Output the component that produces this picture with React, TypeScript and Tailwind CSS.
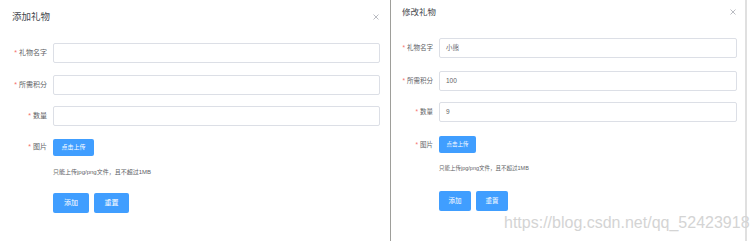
const font = { fontFamily: '"Liberation Sans", "Noto Sans CJK SC", sans-serif' };

function CloseIcon() {
  return (
    <svg width="6" height="6" viewBox="0 0 6 6" className="shrink-0">
      <path d="M0.5 0.5 L5.5 5.5 M5.5 0.5 L0.5 5.5" stroke="#a8abb2" strokeWidth="0.8" />
    </svg>
  );
}

type Row = { label: string; value: string };

function Field({ label, value, labelW, mr, mt, size }: Row & { labelW: string; mr: string; mt: string; size: string }) {
  return (
    <div className={`flex items-center h-[20px] ${mt}`}>
      <div className={`${labelW} shrink-0 pr-[6px] text-right text-[#606266] whitespace-nowrap ${size}`}>
        <span className="text-[#f56c6c] mr-[2px]">*</span>
        {label}
      </div>
      <div
        className={`flex-1 h-[20px] ${mr} border border-[#dcdfe6] rounded-[2px] flex items-center pl-[6px] text-[#606266] ${size}`}
      >
        {value}
      </div>
    </div>
  );
}

export default function App() {
  return (
    <div className="relative w-[756px] h-[241px] bg-white flex overflow-hidden" style={font}>
      {/* 添加 */}
      <div className="w-[390px] shrink-0 flex flex-col">
        <div className="flex items-center justify-between h-[34px] pl-[12px] pr-[11px]">
          <span className="text-[9.5px] text-[#44474d]">添加礼物</span>
          <CloseIcon />
        </div>
        <div className="mt-[9px]">
          <Field label="礼物名字" value="" labelW="w-[53px]" mr="mr-[10px]" mt="" size="text-[7px]" />
          <Field label="所需积分" value="" labelW="w-[53px]" mr="mr-[10px]" mt="mt-[12px]" size="text-[7px]" />
          <Field label="数量" value="" labelW="w-[53px]" mr="mr-[10px]" mt="mt-[11px]" size="text-[7px]" />
          <div className="flex items-center mt-[13px]">
            <div className="w-[53px] shrink-0 pr-[6px] text-right text-[7px] text-[#606266]">
              <span className="text-[#f56c6c] mr-[2px]">*</span>图片
            </div>
            <button className="w-[41px] h-[17px] rounded-[2px] bg-[#409eff] text-white text-[6px]">点击上传</button>
          </div>
          <div className="ml-[53px] mt-[12px] h-[8px] leading-[8px] text-[6px] text-[#606266] whitespace-nowrap">
            只能上传jpg/png文件，且不超过1MB
          </div>
          <div className="ml-[53px] mt-[17px] flex gap-[5px]">
            <button className="w-[36px] h-[20px] rounded-[2px] bg-[#409eff] text-white text-[7px]">添加</button>
            <button className="w-[35px] h-[20px] rounded-[2px] bg-[#409eff] text-white text-[7px]">重置</button>
          </div>
        </div>
      </div>

      <div className="w-px shrink-0 bg-[#9e9e9a]" />

      {/* 修改 */}
      <div className="w-[354px] shrink-0 flex flex-col">
        <div className="flex items-center justify-between h-[24px] pl-[11px] pr-[9px]">
          <span className="text-[8.5px] text-[#44474d]">修改礼物</span>
          <CloseIcon />
        </div>
        <div className="mt-[14px]">
          <Field label="礼物名字" value="小熊" labelW="w-[48px]" mr="mr-[8px]" mt="" size="text-[6.5px]" />
          <Field label="所需积分" value="100" labelW="w-[48px]" mr="mr-[8px]" mt="mt-[13px]" size="text-[6.5px]" />
          <Field label="数量" value="9" labelW="w-[48px]" mr="mr-[8px]" mt="mt-[11px]" size="text-[6.5px]" />
          <div className="flex items-center mt-[14px]">
            <div className="w-[48px] shrink-0 pr-[6px] text-right text-[6.5px] text-[#606266]">
              <span className="text-[#f56c6c] mr-[2px]">*</span>图片
            </div>
            <button className="w-[37px] h-[17px] rounded-[2px] bg-[#409eff] text-white text-[5.5px]">点击上传</button>
          </div>
          <div className="ml-[48px] mt-[11px] h-[8px] leading-[8px] text-[5.5px] text-[#606266] whitespace-nowrap">
            只能上传jpg/png文件，且不超过1MB
          </div>
          <div className="ml-[48px] mt-[19px] flex gap-[5px]">
            <button className="w-[32px] h-[20px] rounded-[2px] bg-[#409eff] text-white text-[6.5px]">添加</button>
            <button className="w-[32px] h-[20px] rounded-[2px] bg-[#409eff] text-white text-[6.5px]">重置</button>
          </div>
        </div>
      </div>

      <div className="w-[2px] shrink-0 bg-[#e0e0e0]" />
      <div className="flex-1" />

      {/* watermark */}
      <div className="absolute left-[504px] top-[213px] text-[16px] leading-[20px] text-[#d4d4d4] whitespace-nowrap">
        https://blog.csdn.net/qq_52423918
      </div>
    </div>
  );
}
